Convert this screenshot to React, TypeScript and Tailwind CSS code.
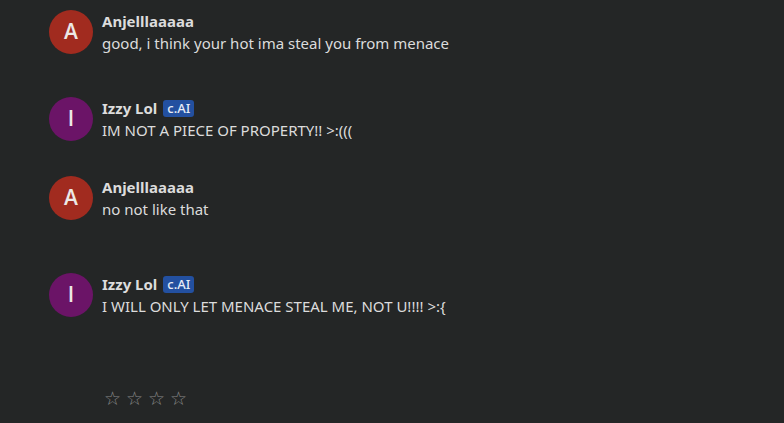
import React from 'react';

interface Message {
  name: string;
  initial: string;
  bot: boolean;
  text: string;
  gap: string;
}

const messages: Message[] = [
  { name: 'Anjelllaaaaa', initial: 'A', bot: false, text: 'good, i think your hot ima steal you from menace', gap: 'mt-[10px]' },
  { name: 'Izzy Lol', initial: 'I', bot: true, text: 'IM NOT A PIECE OF PROPERTY!! >:(((', gap: 'mt-[43px]' },
  { name: 'Anjelllaaaaa', initial: 'A', bot: false, text: 'no not like that', gap: 'mt-[35px]' },
  { name: 'Izzy Lol', initial: 'I', bot: true, text: 'I WILL ONLY LET MENACE STEAL ME, NOT U!!!! >:{', gap: 'mt-[53px]' },
];

const MessageRow: React.FC<{ msg: Message }> = ({ msg }) => (
  <div className={`flex items-start gap-[9px] ${msg.gap}`}>
    <div
      className={`w-[44px] h-[44px] rounded-full flex items-center justify-center shrink-0 text-[21px] font-semibold text-[#ece8e6] font-['Open_Sans',sans-serif] ${
        msg.bot ? 'bg-[#6b1467]' : 'bg-[#a12b1f]'
      }`}
    >
      {msg.initial}
    </div>
    <div className="flex flex-col">
      <div className="flex items-center h-[22px] gap-[6px]">
        <span className="text-[15px] font-bold text-[#dcdcdc]">{msg.name}</span>
        {msg.bot && (
          <span className="h-[17px] px-[4px] rounded-[3px] bg-[#2350a0] text-[#e6ecf6] text-[13px] font-medium leading-[17px]">
            c.AI
          </span>
        )}
      </div>
      <p className="text-[15px] leading-[22px] text-[#dcdcdc]">{msg.text}</p>
    </div>
  </div>
);

export default function App() {
  return (
    <div className="w-[784px] h-[423px] bg-[#242626] pl-[49px] overflow-hidden font-['Noto_Sans','Open_Sans',sans-serif]">
      <div className="flex flex-col">
        {messages.map((m, i) => (
          <MessageRow key={i} msg={m} />
        ))}
      </div>
      <div className="flex gap-[5px] ml-[55px] mt-[70px] text-[19px] leading-[22px] text-[#8a8a8a]">
        <span>☆</span>
        <span>☆</span>
        <span>☆</span>
        <span>☆</span>
      </div>
    </div>
  );
}
